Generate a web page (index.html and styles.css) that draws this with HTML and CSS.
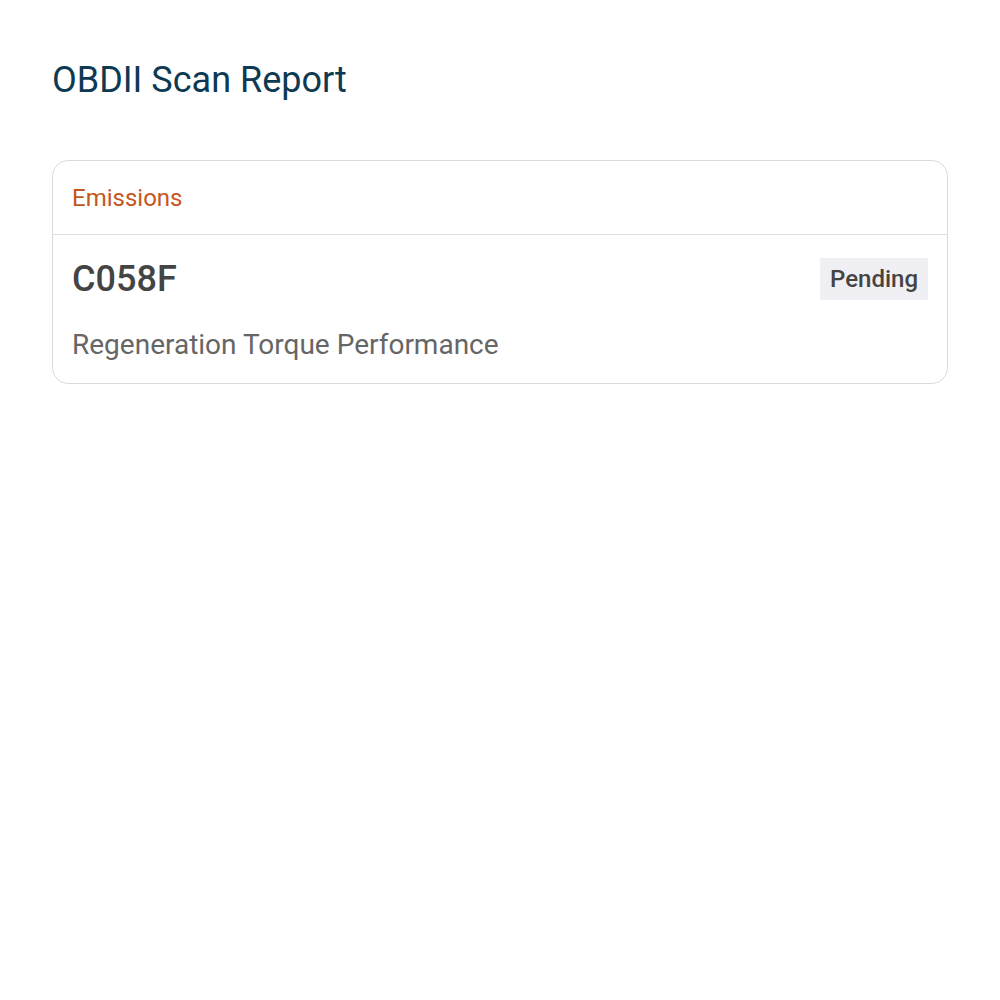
FILE: index.html
```html
<!DOCTYPE html>
<html lang="en">
<head>
  <meta charset="UTF-8" />
  <meta name="viewport" content="width=device-width, initial-scale=1.0"/>
  <title>OBDII Scan Report</title>
  <link rel="stylesheet" href="styles.css">
</head>
<body>
  <div class="report">
    <h1>OBDII Scan Report</h1>

    <div class="card">
      <div class="card-header">Emissions</div>
      <div class="card-body">
        <div class="code-row">
          <span class="code">C058F</span>
          <span class="status">Pending</span>
        </div>
        <p class="desc">Regeneration Torque Performance</p>
      </div>
    </div>
  </div>
</body>
</html>
```

FILE: styles.css
```css
:root {
  --title-color: #0d3a52;
  --accent: #c4561c;
  --text-dark: #444;
  --text-muted: #666;
  --border: #dcdcdc;
  --badge-bg: #f0f0f4;
}

* {
  margin: 0;
  padding: 0;
  box-sizing: border-box;
  font-family: Roboto, 'Liberation Sans', sans-serif;
}

body {
  background: #fff;
  color: var(--text-dark);
}

.report {
  padding: 58px 52px;
}

h1 {
  font-size: 36px;
  font-weight: 400;
  color: var(--title-color);
  line-height: 44px;
  margin-bottom: 58px;
}

.card {
  border: 1px solid var(--border);
  border-radius: 16px;
}

.card-header {
  color: var(--accent);
  font-size: 24px;
  padding: 22px 19px 21px;
  line-height: 30px;
  border-bottom: 1px solid var(--border);
}

.card-body {
  padding: 23px 19px 21px;
}

.code-row {
  display: flex;
  justify-content: space-between;
  align-items: center;
}

.code {
  font-size: 36px;
  font-weight: 500;
  color: var(--text-dark);
  line-height: 42px;
}

.status {
  background: var(--badge-bg);
  color: var(--text-dark);
  font-size: 24px;
  font-weight: 500;
  line-height: 28px;
  padding: 7px 10px;
}

.desc {
  margin-top: 28px;
  font-size: 28px;
  color: var(--text-muted);
  line-height: 34px;
}
```
